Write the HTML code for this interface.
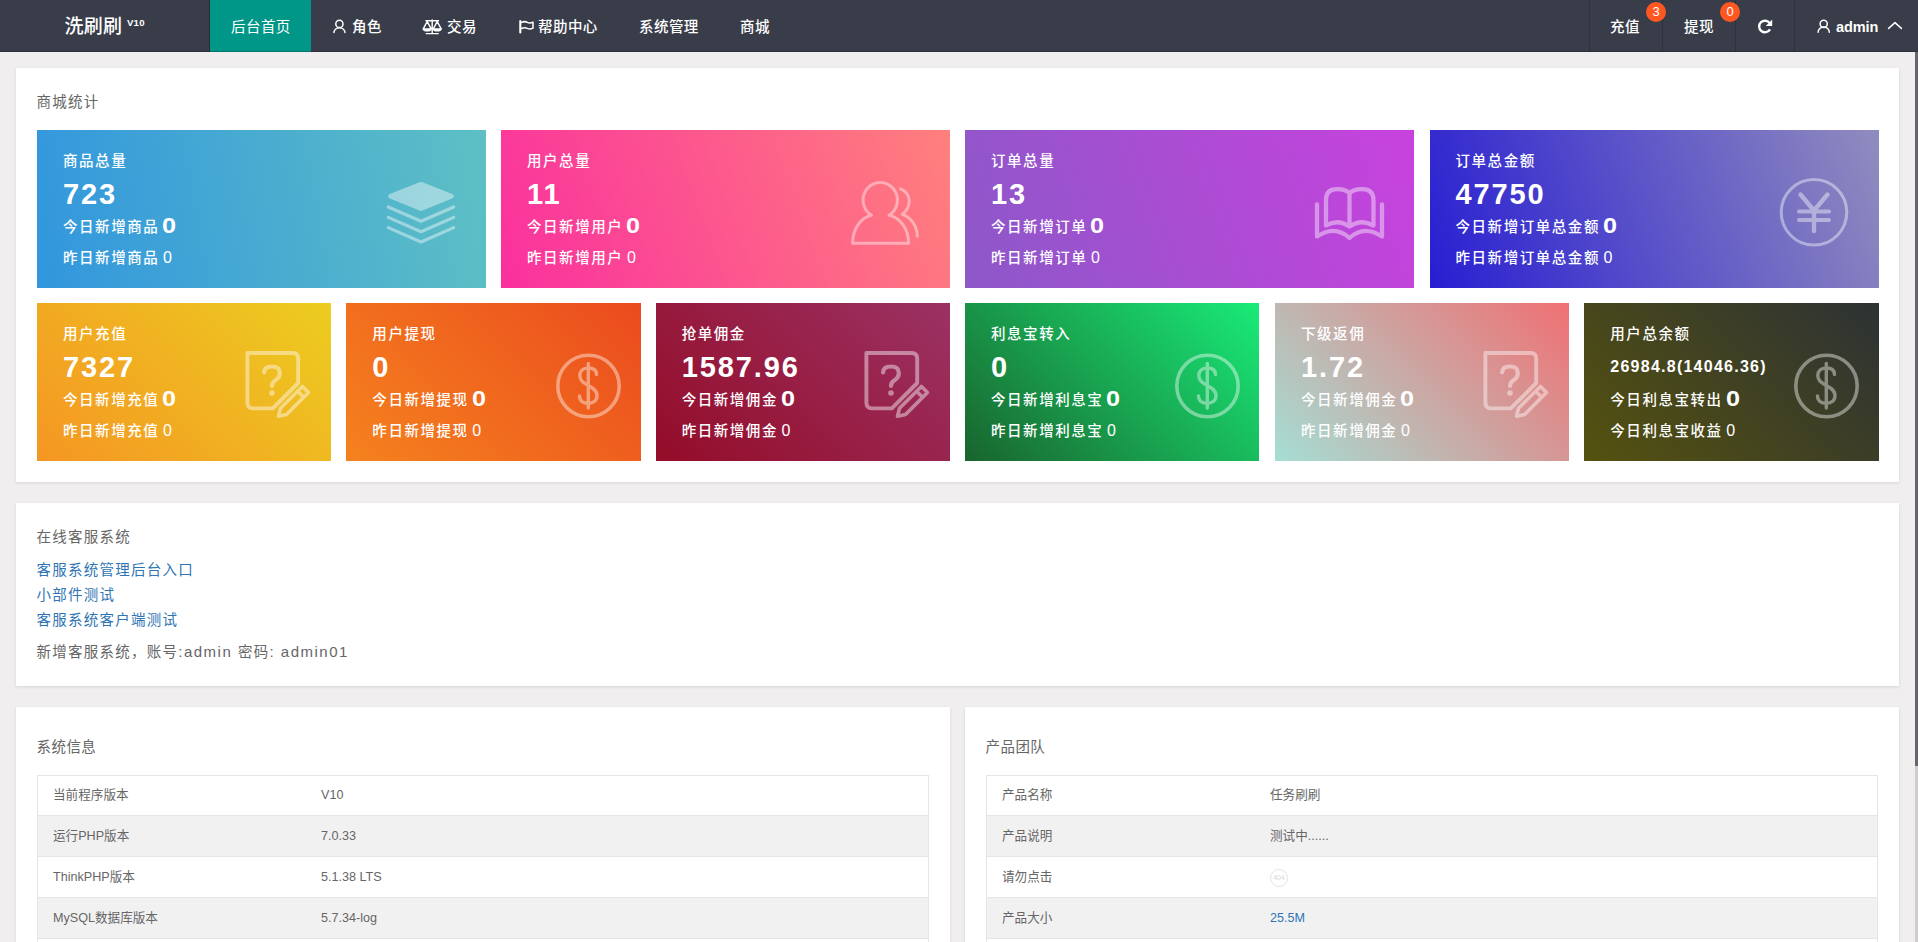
<!DOCTYPE html>
<html lang="zh-CN">
<head>
<meta charset="utf-8">
<title>洗刷刷 V10</title>
<style>
*{box-sizing:border-box;margin:0;padding:0}
html,body{width:1918px;height:942px;overflow:hidden}
body{position:relative;background:#f0eeef;font-family:"Liberation Sans","Noto Sans CJK SC",sans-serif;color:#666;font-size:14px}
.abs{position:absolute}
/* header */
.hd{position:absolute;left:0;top:0;width:1918px;height:52px;background:#393d49;color:#fff}
.logo{position:absolute;left:64.5px;top:0;height:52px;line-height:54px;font-size:19px;letter-spacing:.3px;font-weight:500;color:#fff;white-space:nowrap}
.logo sup{position:absolute;left:62.5px;top:-4.5px;font-size:9.6px;font-weight:700;letter-spacing:.2px}
.tab{position:absolute;left:210px;top:0;width:101px;height:52px;background:#009688}
.nv{position:absolute;top:0;height:52px;line-height:54px;font-size:14.5px;letter-spacing:.45px;color:#fff;white-space:nowrap;font-weight:500}
.nv.act{font-weight:400}
.nv svg{position:absolute}
.sep{position:absolute;top:0;width:1px;height:52px;background:rgba(0,0,0,.18)}
.bdg{position:absolute;top:1.7px;width:20px;height:20px;border-radius:10px;background:#ff5722;color:#fff;font-size:13px;line-height:20px;text-align:center}
/* panels */
.panel{position:absolute;background:#fff;box-shadow:0 1px 3px rgba(0,0,0,.11)}
.ttl{position:absolute;left:20.5px;font-size:14.5px;line-height:20px;color:#666;white-space:nowrap;letter-spacing:.45px}
.ls{letter-spacing:1.25px}
.lat{letter-spacing:1.5px;font-size:15px}
/* stat cards */
.card{position:absolute;height:158px;color:#fff;letter-spacing:1.55px;overflow:hidden}
.card .l{position:absolute;left:26px;white-space:nowrap;font-size:14.5px;line-height:20px;font-weight:500}
.card .l1{top:21px}
.card .l2{top:44px;font-size:29px;line-height:40px;font-weight:700;letter-spacing:1.9px}
.card .l2.sm{font-size:16px;letter-spacing:1.25px}
.card .l3{top:83.5px;line-height:26px}
.card .l3 b{font-size:22.5px;line-height:0;font-weight:700;margin-left:-2.5px;letter-spacing:1px;display:inline-block;transform:scaleX(1.12);transform-origin:0 50%;position:relative;top:1.5px}
.card .l4{top:117.7px}
.card .l4 span{margin-left:-2px;font-size:16px;line-height:0}
.card svg{position:absolute}
.ic{fill:none;stroke:#fff;stroke-linecap:round;stroke-linejoin:round}
/* tables */
.tb{position:absolute;border:1px solid #e6e6e6;border-bottom:0;font-size:12.6px;color:#666}
.tr{position:relative;height:41px;border-bottom:1px solid #e6e6e6;line-height:40px;white-space:nowrap}
.tr:first-child{height:40px;line-height:39px}
.tr.ev{background:#f2f1f2}
.tr span{position:absolute;top:0}
.tr .c1{left:15px}
.tr .c2{left:283px}
a{color:#2f75b5;text-decoration:none}
.e404{position:absolute;left:0;top:12px;width:18px;height:18px;border:1px solid #e4e4e4;border-radius:50%;font-style:normal;font-size:7px;line-height:16px;text-align:center;color:#d8d8d8;letter-spacing:0}
</style>
</head>
<body>
<!-- HEADER -->
<div class="hd">
  <div class="logo">洗刷刷<sup>V10</sup></div>
  <div class="tab"></div>
  <div class="abs" style="left:209px;top:0;width:1px;height:52px;background:rgba(0,0,0,.28)"></div>
  <div class="abs" style="left:0;top:51px;width:1918px;height:1px;background:rgba(0,0,0,.22)"></div>
  <div class="nv act" style="left:231px">后台首页</div>
  <div class="nv" style="left:352px">角色</div>
  <div class="nv" style="left:447px">交易</div>
  <div class="nv" style="left:538px">帮助中心</div>
  <div class="nv" style="left:639px">系统管理</div>
  <div class="nv" style="left:740px">商城</div>
  <svg class="hi" width="1918" height="52" viewBox="0 0 1918 52" style="position:absolute;left:0;top:0;pointer-events:none">
    <g fill="none" stroke="#fff" stroke-width="1.5" stroke-linecap="round" stroke-linejoin="round">
      <circle cx="339.4" cy="23.9" r="3.6"/><path d="M333.9 32.4 A5.6 5.4 0 0 1 345 32.4"/>
      <circle cx="1823.7" cy="23.8" r="3.6"/><path d="M1818.1 32.3 A5.6 5.4 0 0 1 1829.3 32.3"/>
      <path d="M1888.6 28.4 L1895 22.6 L1901.4 28.4"/>
      <path stroke-width="1.4" d="M426 20.7 H438.5 M432.2 19.9 V33.5 M426.2 33.6 H438.2 M427.2 21.6 L423.2 28.9 H431.2 Z M437.2 21.6 L433.2 28.9 H441.2 Z"/>
      <path stroke-width="2.1" d="M520.3 21 V32.4"/>
      <path stroke-width="1.5" d="M521.5 22.4 Q524.5 20.9 527.3 22.3 Q530 23.7 533 22.1 V28.2 Q530 29.8 527.3 28.4 Q524.5 27 521.5 28.5"/>
      <path stroke-width="2.4" stroke-linecap="butt" d="M1769.75 23.17 A5.8 5.8 0 1 0 1770 29.4"/>
    </g>
    <g fill="#fff">
      <path d="M422.6 28.9 H431.8 Q431.2 31.6 427.2 31.6 Q423.2 31.6 422.6 28.9 Z M432.6 28.9 H441.8 Q441.2 31.6 437.2 31.6 Q433.2 31.6 432.6 28.9 Z"/>
      <path d="M1772.2 19.6 V26 H1765.8 Z"/>
    </g>
  </svg>
  <div class="sep" style="left:1589px"></div>
  <div class="sep" style="left:1662px"></div>
  <div class="sep" style="left:1735px"></div>
  <div class="sep" style="left:1794px"></div>
  <div class="nv" style="left:1610px">充值</div>
  <div class="bdg" style="left:1646px">3</div>
  <div class="nv" style="left:1684px">提现</div>
  <div class="bdg" style="left:1720px">0</div>
  <div class="nv" style="left:1836px;font-weight:700;letter-spacing:-.1px">admin</div>
</div>

<!-- PANEL 1 -->
<div class="panel" style="left:16px;top:68px;width:1883px;height:414px">
  <div class="ttl ls" style="top:24px">商城统计</div>
  <!--CARDS-->
  <div class="card" style="left:21px;top:62px;width:449px;background:linear-gradient(80deg,#3296de,#5ec0c4)"><div class="l l1">商品总量</div><div class="l l2">723</div><div class="l l3">今日新增商品 <b>0</b></div><div class="l l4">昨日新增商品 <span>0</span></div><svg style="left:343px;top:45px;opacity:0.42" width="82" height="75" viewBox="380 175 82 75"><g transform="translate(0 0)"><path fill="#fff" stroke="#fff" stroke-width="5" stroke-linejoin="round" d="M390.8 196.3 L421 184.3 L451.2 196.3 L421 208.4 Z"/><path class="ic" stroke-width="3.2" d="M388.3 207 L421 221.3 L453.7 207 M388.3 217.4 L421 231.7 L453.7 217.4 M388.3 227.6 L421 242 L453.7 227.6"/></g></svg></div>
  <div class="card" style="left:485px;top:62px;width:449px;background:linear-gradient(70deg,#fa309e,#ff807d)"><div class="l l1">用户总量</div><div class="l l2">11</div><div class="l l3">今日新增用户 <b>0</b></div><div class="l l4">昨日新增用户 <span>0</span></div><svg style="left:344px;top:45px;opacity:0.42" width="80" height="75" viewBox="845 175 80 75"><g transform="translate(0 0)"><path class="ic" stroke-width="3" d="M871.5 215.2 A17.2 17.6 0 1 1 889 215.2 C899 217 908.6 228 908.6 243.3 H852.6 C852.6 228 862 217 871.5 215.2 Z M900.6 188.8 C906 190.8 909.2 196 909.2 201 C909.2 207 906 211.5 902.2 214.4 C910.5 217 917.3 226 917.3 236.2"/></g></svg></div>
  <div class="card" style="left:949px;top:62px;width:449px;background:linear-gradient(70deg,#8c58c8,#c842de)"><div class="l l1">订单总量</div><div class="l l2">13</div><div class="l l3">今日新增订单 <b>0</b></div><div class="l l4">昨日新增订单 <span>0</span></div><svg style="left:345px;top:50px;opacity:0.42" width="80" height="68" viewBox="1310 180 80 68"><g transform="translate(0 0)"><path class="ic" stroke-width="4.3" d="M1326 225.5 V200 Q1326 189.2 1337 189.2 Q1346 189.2 1349.5 193.5 Q1353 189.2 1362 189.2 Q1373.5 189.2 1373.5 200 V225.5 Q1361 218.5 1349.5 226.5 Q1338 218.5 1326 225.5 Z M1349.5 193.5 V226.5 M1317 204.5 V236.5 Q1335 224.5 1349.5 238 Q1364 224.5 1382 236.5 V204.5"/></g></svg></div>
  <div class="card" style="left:1413.5px;top:62px;width:449px;background:linear-gradient(70deg,#281ed2,#918cbe)"><div class="l l1">订单总金额</div><div class="l l2">47750</div><div class="l l3">今日新增订单总金额 <b>0</b></div><div class="l l4">昨日新增订单总金额 <span>0</span></div><svg style="left:345.5px;top:42px;opacity:0.42" width="80" height="80" viewBox="1775 172 80 80"><g transform="translate(0 0)"><circle class="ic" stroke-width="3" cx="1814" cy="212.3" r="32.8"/><path class="ic" stroke-width="4.4" d="M1800.5 194.5 L1814 210.5 L1827.5 194.5 M1814 210.5 V231"/><path class="ic" stroke-width="4" d="M1799 211.5 H1829 M1799 220 H1829"/></g></svg></div>
  <div class="card" style="left:21.00px;top:235px;width:294.33px;background:linear-gradient(45deg,#f59623,#eccd20)"><div class="l l1">用户充值</div><div class="l l2">7327</div><div class="l l3">今日新增充值 <b>0</b></div><div class="l l4">昨日新增充值 <span>0</span></div><svg style="left:203px;top:42px;opacity:0.44" width="80" height="80" viewBox="240 345 80 80"><g transform="translate(0 0)"><path class="ic" stroke-width="3.9" stroke-linejoin="miter" d="M272.8 408.4 H253 Q247.4 408.4 247.4 402.8 V353 H292.6 Q298.2 353 298.2 358.6 V383 Z"/><path class="ic" stroke-width="4.2" d="M264.1 372.5 Q264.1 366.5 272 366.5 Q279.8 366.5 279.8 373 Q279.8 377.5 275.5 380.3 Q272 382.6 272 386"/><circle fill="#fff" cx="272" cy="393" r="2.8"/><g transform="translate(276.1 418.1) rotate(-45)"><path class="ic" stroke-width="3.6" stroke-linejoin="miter" d="M3 0.4 L10 -3.8 H41 V4.8 H10 Z M34.2 -3.8 V4.8"/></g></g></svg></div>
  <div class="card" style="left:330.33px;top:235px;width:294.33px;background:linear-gradient(45deg,#f5821e,#eb4b1e)"><div class="l l1">用户提现</div><div class="l l2">0</div><div class="l l3">今日新增提现 <b>0</b></div><div class="l l4">昨日新增提现 <span>0</span></div><svg style="left:203.67px;top:45px;opacity:0.42" width="78" height="78" viewBox="550.003 348 78 78"><g transform="translate(0.00333333 0)"><circle class="ic" stroke-width="3.6" cx="588.5" cy="386" r="30.7"/><path class="ic" stroke-width="3.4" d="M596.5 374.5 C596.5 370 593 368 588.3 368 C583 368 579.8 371 579.8 375.5 C579.8 381 584 383 588.3 385.5 C593 388 597 390.5 597 395.5 C597 400.5 593.5 403.3 588.3 403.3 C583 403.3 579.5 400.5 579.5 396 M588.3 363.5 V408"/></g></svg></div>
  <div class="card" style="left:639.67px;top:235px;width:294.33px;background:linear-gradient(45deg,#940c28,#9b3264)"><div class="l l1">抢单佣金</div><div class="l l2">1587.96</div><div class="l l3">今日新增佣金 <b>0</b></div><div class="l l4">昨日新增佣金 <span>0</span></div><svg style="left:203px;top:42px;opacity:0.44" width="80" height="80" viewBox="858.667 345 80 80"><g transform="translate(618.667 0)"><path class="ic" stroke-width="3.9" stroke-linejoin="miter" d="M272.8 408.4 H253 Q247.4 408.4 247.4 402.8 V353 H292.6 Q298.2 353 298.2 358.6 V383 Z"/><path class="ic" stroke-width="4.2" d="M264.1 372.5 Q264.1 366.5 272 366.5 Q279.8 366.5 279.8 373 Q279.8 377.5 275.5 380.3 Q272 382.6 272 386"/><circle fill="#fff" cx="272" cy="393" r="2.8"/><g transform="translate(276.1 418.1) rotate(-45)"><path class="ic" stroke-width="3.6" stroke-linejoin="miter" d="M3 0.4 L10 -3.8 H41 V4.8 H10 Z M34.2 -3.8 V4.8"/></g></g></svg></div>
  <div class="card" style="left:949.00px;top:235px;width:294.33px;background:linear-gradient(45deg,#19642d,#19eb78)"><div class="l l1">利息宝转入</div><div class="l l2">0</div><div class="l l3">今日新增利息宝 <b>0</b></div><div class="l l4">昨日新增利息宝 <span>0</span></div><svg style="left:203.67px;top:45px;opacity:0.42" width="78" height="78" viewBox="1168.67 348 78 78"><g transform="translate(618.67 0)"><circle class="ic" stroke-width="3.6" cx="588.5" cy="386" r="30.7"/><path class="ic" stroke-width="3.4" d="M596.5 374.5 C596.5 370 593 368 588.3 368 C583 368 579.8 371 579.8 375.5 C579.8 381 584 383 588.3 385.5 C593 388 597 390.5 597 395.5 C597 400.5 593.5 403.3 588.3 403.3 C583 403.3 579.5 400.5 579.5 396 M588.3 363.5 V408"/></g></svg></div>
  <div class="card" style="left:1259.00px;top:235px;width:294.33px;background:linear-gradient(45deg,#a5ded4,#f07073)"><div class="l l1">下级返佣</div><div class="l l2">1.72</div><div class="l l3">今日新增佣金 <b>0</b></div><div class="l l4">昨日新增佣金 <span>0</span></div><svg style="left:203px;top:42px;opacity:0.44" width="80" height="80" viewBox="1478 345 80 80"><g transform="translate(1238 0)"><path class="ic" stroke-width="3.9" stroke-linejoin="miter" d="M272.8 408.4 H253 Q247.4 408.4 247.4 402.8 V353 H292.6 Q298.2 353 298.2 358.6 V383 Z"/><path class="ic" stroke-width="4.2" d="M264.1 372.5 Q264.1 366.5 272 366.5 Q279.8 366.5 279.8 373 Q279.8 377.5 275.5 380.3 Q272 382.6 272 386"/><circle fill="#fff" cx="272" cy="393" r="2.8"/><g transform="translate(276.1 418.1) rotate(-45)"><path class="ic" stroke-width="3.6" stroke-linejoin="miter" d="M3 0.4 L10 -3.8 H41 V4.8 H10 Z M34.2 -3.8 V4.8"/></g></g></svg></div>
  <div class="card" style="left:1568.30px;top:235px;width:294.33px;background:linear-gradient(45deg,#55520f,#2d3234)"><div class="l l1">用户总余额</div><div class="l l2 sm">26984.8(14046.36)</div><div class="l l3">今日利息宝转出 <b>0</b></div><div class="l l4">今日利息宝收益 <span>0</span></div><svg style="left:203.67px;top:45px;opacity:0.42" width="78" height="78" viewBox="1787.97 348 78 78"><g transform="translate(1237.97 0)"><circle class="ic" stroke-width="3.6" cx="588.5" cy="386" r="30.7"/><path class="ic" stroke-width="3.4" d="M596.5 374.5 C596.5 370 593 368 588.3 368 C583 368 579.8 371 579.8 375.5 C579.8 381 584 383 588.3 385.5 C593 388 597 390.5 597 395.5 C597 400.5 593.5 403.3 588.3 403.3 C583 403.3 579.5 400.5 579.5 396 M588.3 363.5 V408"/></g></svg></div>
  <!--/CARDS-->
</div>

<!-- PANEL 2 -->
<div class="panel" style="left:16px;top:503px;width:1883px;height:183px">
  <div class="ttl ls" style="top:24px">在线客服系统</div>
  <div class="ttl ls" style="top:56.5px"><a>客服系统管理后台入口</a></div>
  <div class="ttl ls" style="top:81.5px"><a>小部件测试</a></div>
  <div class="ttl ls" style="top:106.5px"><a>客服系统客户端测试</a></div>
  <div class="ttl ls" style="top:139px">新增客服系统，账号<span class="lat">:admin </span>密码<span class="lat">: admin01</span></div>
</div>

<!-- PANEL 3 -->
<div class="panel" style="left:16px;top:707px;width:934px;height:260px">
  <div class="ttl" style="top:30px">系统信息</div>
  <div class="tb" style="left:21px;top:68px;width:892px">
    <div class="tr"><span class="c1">当前程序版本</span><span class="c2">V10</span></div>
    <div class="tr ev"><span class="c1">运行PHP版本</span><span class="c2">7.0.33</span></div>
    <div class="tr"><span class="c1">ThinkPHP版本</span><span class="c2">5.1.38 LTS</span></div>
    <div class="tr ev"><span class="c1">MySQL数据库版本</span><span class="c2">5.7.34-log</span></div>
    <div class="tr"></div>
  </div>
</div>
<div class="panel" style="left:965px;top:707px;width:934px;height:260px">
  <div class="ttl" style="top:30px">产品团队</div>
  <div class="tb" style="left:21px;top:68px;width:892px">
    <div class="tr"><span class="c1">产品名称</span><span class="c2">任务刷刷</span></div>
    <div class="tr ev"><span class="c1">产品说明</span><span class="c2">测试中......</span></div>
    <div class="tr"><span class="c1">请勿点击</span><span class="c2"><i class="e404">404</i></span></div>
    <div class="tr ev"><span class="c1">产品大小</span><span class="c2"><a>25.5M</a></span></div>
    <div class="tr"></div>
  </div>
</div>

<!-- scrollbar -->
<div class="abs" style="left:1915px;top:52px;width:3px;height:890px;background:#cfcdd0"></div>
<div class="abs" style="left:1915px;top:52px;width:3px;height:714px;background:#68666a"></div>
</body>
</html>
